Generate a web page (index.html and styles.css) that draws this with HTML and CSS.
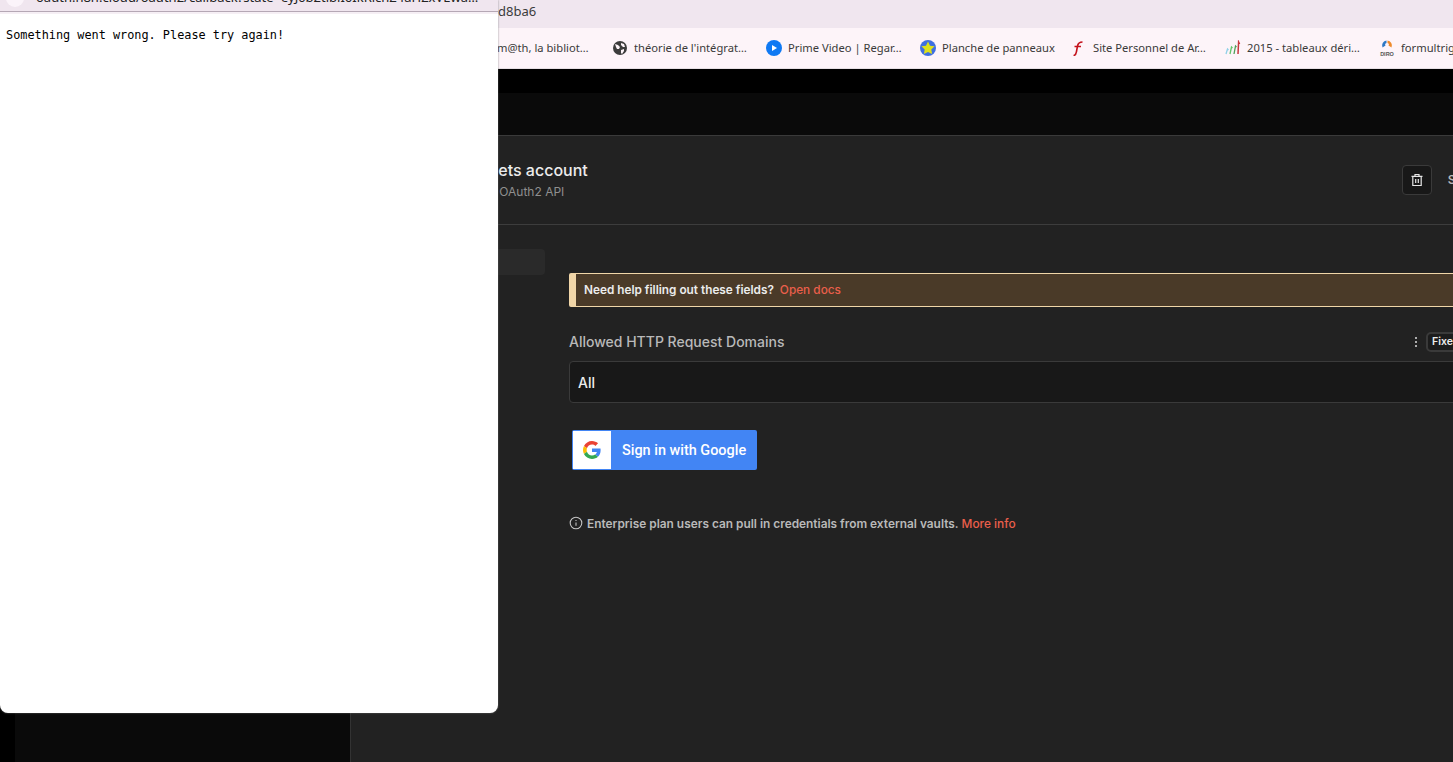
FILE: index.html
```html
<!DOCTYPE html>
<html lang="fr">
<head>
<meta charset="utf-8">
<title>n8n credential</title>
<link rel="stylesheet" href="styles.css">
</head>
<body>
<div class="page">
  <div class="tabbar"><span class="tab-url">d8ba6</span></div>
  <nav class="bookmarks">
    <div class="bm"><span class="bm-ico"></span><span class="bm-text">Bibm@th, la bibliot…</span></div>
    <div class="bm">
      <svg class="bm-ico" viewBox="0 0 16 16"><circle cx="8" cy="8" r="7" fill="#3c3c3c"/><path d="M3 4l3 1 2 2-1 2-2 0-1-2zM9 3l3 1 1 3-2 0-2-2zM9 10l3-1 0 2-2 3-1-1z" fill="#fdf4f9"/></svg>
      <span class="bm-text">théorie de l'intégrat…</span>
    </div>
    <div class="bm">
      <svg class="bm-ico" viewBox="0 0 16 16"><circle cx="8" cy="8" r="8" fill="#0f79f3"/><path d="M6 5l5 3-5 3z" fill="#fff"/></svg>
      <span class="bm-text">Prime Video | Regar…</span>
    </div>
    <div class="bm bm-short">
      <svg class="bm-ico" viewBox="0 0 16 16"><circle cx="8" cy="8" r="8" fill="#3f6fe0"/><path d="M8 1.500l2 4.200 4.600.6-3.300 3.200.8 4.600L8 11.900l-4.100 2.200.8-4.600L1.400 6.300 6 5.700z" fill="#dde11a"/></svg>
      <span class="bm-text">Planche de panneaux</span>
    </div>
    <div class="bm">
      <svg class="bm-ico" viewBox="0 0 16 16"><path d="M2.500 15.500c2 0 2.500-1.500 3-4l1-5.500c.4-2 1.200-4 5-4M3.500 6.500h6.500" fill="none" stroke="#c4121c" stroke-width="1.600"/></svg>
      <span class="bm-text">Site Personnel de Ar…</span>
    </div>
    <div class="bm">
      <svg class="bm-ico" viewBox="0 0 16 16"><path d="M1 14l1.500-5 1 1" fill="none" stroke="#8fd0e8" stroke-width="1.300"/><path d="M5 14l1.500-7 1 1" fill="none" stroke="#62c46a" stroke-width="1.300"/><path d="M9 14l1.500-8 1 1" fill="none" stroke="#4f9f5a" stroke-width="1.300"/><path d="M13 14l.6-12 1 2" fill="none" stroke="#c9383f" stroke-width="1.500"/></svg>
      <span class="bm-text">2015 - tableaux déri…</span>
    </div>
    <div class="bm">
      <svg class="bm-ico" viewBox="0 0 16 16"><path d="M7.500 .5a5 5 0 0 0-4 7l3-2-.5-1.500 1.500-1z" fill="#2f78c4"/><path d="M8.500 .5a5 5 0 0 1 4 7l-3-2 .5-1.500-1.500-1z" fill="#ee8a2c"/><text x="8" y="15.500" text-anchor="middle" class="diro">DIRO</text></svg>
      <span class="bm-text">formultrig</span>
    </div>
  </nav>
  <div class="blackband"></div>
  <div class="app">
    <aside class="gutter"></aside>
    <aside class="sidebar"></aside>
    <div class="main">
      <div class="topbar"></div>
      <div class="panel">
        <header class="cred-head">
          <div class="cred-titles">
            <div class="cred-title">Google Sheets account</div>
            <div class="cred-sub">Google Sheets OAuth2 API</div>
          </div>
          <div class="cred-actions">
            <button class="trash" aria-label="Delete">
              <svg viewBox="0 0 14 14" class="trash-ico" fill="none" stroke="#e6e6e6" stroke-width="1.200"><path d="M1.500 3.300h11M5 3.300V1.500h4v1.800M2.800 3.300v9.200h8.400V3.300"/><path d="M5.700 6v4M8.300 6v4"/></svg>
            </button>
            <span class="save">Save</span>
          </div>
        </header>
        <div class="cred-body">
          <div class="tabs"><div class="tab-active"></div></div>
          <div class="form">
            <div class="callout">
              <span class="callout-text">Need help filling out these fields?</span>
              <a class="link">Open docs</a>
            </div>
            <div class="field-head">
              <span class="field-label">Allowed HTTP Request Domains</span>
              <div class="field-tools">
                <svg class="kebab" viewBox="0 0 4 12"><circle cx="2" cy="2" r="1" fill="#ddd"/><circle cx="2" cy="6" r="1" fill="#ddd"/><circle cx="2" cy="10" r="1" fill="#ddd"/></svg>
                <span class="pill">Fixed</span>
              </div>
            </div>
            <div class="select">All</div>
            <button class="google">
              <span class="google-tile">
                <svg viewBox="0 0 48 48" class="g-logo">
                  <path fill="#EA4335" d="M24 9.500c3.540 0 6.710 1.220 9.210 3.600l6.850-6.850C35.900 2.380 30.470 0 24 0 14.620 0 6.510 5.380 2.560 13.220l7.980 6.190C12.430 13.720 17.740 9.500 24 9.500z"/>
                  <path fill="#4285F4" d="M46.980 24.550c0-1.570-.15-3.090-.38-4.550H24v9.020h12.940c-.58 2.960-2.260 5.480-4.780 7.180l7.730 6c4.510-4.180 7.090-10.360 7.090-17.650z"/>
                  <path fill="#FBBC05" d="M10.530 28.590c-.48-1.450-.76-2.990-.76-4.590s.27-3.140.76-4.590l-7.980-6.190C.92 16.460 0 20.120 0 24c0 3.880.92 7.540 2.560 10.780l7.970-6.190z"/>
                  <path fill="#34A853" d="M24 48c6.480 0 11.930-2.130 15.890-5.810l-7.730-6c-2.150 1.450-4.920 2.300-8.160 2.300-6.260 0-11.570-4.220-13.470-9.910l-7.980 6.190C6.510 42.620 14.620 48 24 48z"/>
                </svg>
              </span>
              <span class="google-label">Sign in with Google</span>
            </button>
            <div class="note">
              <svg class="note-ico" viewBox="0 0 14 14" fill="none" stroke="#c4c4c4" stroke-width="1.100"><circle cx="7" cy="7" r="5.800"/><path d="M7 6.400v3.400"/><path d="M7 4.100v.8"/></svg>
              <span>Enterprise plan users can pull in credentials from external vaults.</span>
              <a class="link">More info</a>
            </div>
          </div>
        </div>
      </div>
    </div>
  </div>
</div>
<div class="popup">
  <div class="popup-bar">
    <span class="popup-ico"></span>
    <span class="popup-url">oauth.n8n.cloud/oauth2/callback?state=eyJ0b2tlbiI6IkRlcnZ4aHZxVEwa…</span>
  </div>
  <div class="popup-strip"></div>
  <pre class="popup-msg">Something went wrong. Please try again!</pre>
</div>
</body>
</html>
```
FILE: styles.css
```css
* { box-sizing: border-box; }
html, body { margin: 0; padding: 0; height: 100%; overflow: hidden; background: #000; }
body { font-family: "Inter", "Liberation Sans", sans-serif; }

.page { width: 1453px; height: 762px; display: flex; flex-direction: column; overflow: hidden; }

.tabbar { height: 28px; flex: none; background: #f0e6ef; padding: 0 0 0 498px; }
.tab-url { font: 13px/21px "Noto Sans", "Open Sans", sans-serif; color: #3b3b3b; }

.bookmarks { height: 41px; flex: none; background: #fdf4f9; border-bottom: 1px solid #e6dfe4; display: flex; align-items: center; padding-left: 458px; overflow: hidden; }
.bm { flex: none; width: 154px; display: flex; align-items: center; gap: 6px; }
.bm-short { width: 151px; }
.bm-ico { flex: none; width: 16px; height: 16px; display: block; }
.bm-text { font: 11.200px/16px "Noto Sans", "Open Sans", sans-serif; color: #3a3a3a; white-space: nowrap; width: 116px; overflow: hidden; }
.diro { font: 600 5.500px "Liberation Sans", sans-serif; fill: #555; }

.blackband { height: 24px; flex: none; background: #000; }

.app { flex: 1; display: flex; min-height: 0; }
.gutter { width: 15px; flex: none; background: #000; }
.sidebar { flex: none; background: #0a0a0a; border-right: 1px solid #333; width: 336px; }
.main { flex: none; width: 1200px; display: flex; flex-direction: column; background: #222; }
.topbar { flex: none; background: #0a0a0a; margin-left: -1px; border-bottom: 1px solid #3a3a3a; height: 43px; }
.panel { flex: 1; display: flex; flex-direction: column; }

.cred-head { height: 89px; flex: none; display: flex; align-items: center; border-bottom: 1px solid #3d3d3d; padding: 0 0 0 59px; }
.cred-titles { display: flex; flex-direction: column; gap: 2px; padding-bottom: 2px; }
.cred-title { font-size: 16px; line-height: 24px; font-weight: 500; color: #ececec; white-space: nowrap; }
.cred-sub { font-size: 12px; line-height: 16px; color: #8f8f8f; white-space: nowrap; margin-left: 3px; }
.cred-actions { margin-left: 814px; display: flex; align-items: center; gap: 16px; padding-bottom: 1px; }
.trash { width: 30px; height: 30px; padding: 0; background: #181818; border: 1px solid #3a3a3a; border-radius: 4px; display: flex; align-items: center; justify-content: center; }
.trash-ico { width: 14px; height: 14px; display: block; }
.save { font-size: 12px; font-weight: 600; color: #b8b8b8; }

.cred-body { display: flex; padding: 24px 0 0 24px; gap: 24px; }
.tabs { width: 170px; flex: none; }
.tab-active { height: 26px; background: #2a2a2a; border-radius: 4px; }

.form { width: 950px; flex: none; padding-top: 24px; display: flex; flex-direction: column; }
.callout { height: 34px; flex: none; background: #4a3a28; border: 1px solid #f1d6a8; border-left-width: 7px; border-radius: 2px; display: flex; align-items: center; gap: 6px; padding: 0 0 1px 8px; font-size: 11.800px; }
.callout-text { color: #ececec; font-weight: 600; }
.link { color: #ea5f4b; font-weight: 500; }

.field-head { margin-top: 25px; height: 20px; display: flex; align-items: center; }
.field-label { font-size: 14px; line-height: 20px; font-weight: 500; color: #b9b9b9; white-space: nowrap; }
.field-tools { margin-left: auto; width: 105px; display: flex; align-items: center; gap: 8px; }
.kebab { width: 4px; height: 12px; display: block; }
.pill { font-size: 10.500px; font-weight: 600; line-height: 14px; color: #ececec; background: #1c1c1c; border: 2px solid #3a3a3a; border-radius: 5px; padding: 1px 4px; }

.select { margin-top: 9px; height: 42px; flex: none; background: #181818; border: 1px solid #3a3a3a; border-radius: 4px; display: flex; align-items: center; padding-left: 8px; font-size: 14px; font-weight: 500; color: #ececec; }

.google { margin: 27px 0 0 3px; width: 185px; height: 40px; padding: 1px; border: none; border-radius: 2px; background: #4285f4; display: flex; align-items: center; }
.google-tile { width: 38px; height: 38px; background: #fff; display: flex; align-items: center; justify-content: center; flex: none; }
.g-logo { width: 18px; height: 18px; display: block; }
.google-label { margin-left: 11px; font-family: "Roboto", sans-serif; font-size: 14.450px; font-weight: 500; color: #fff; white-space: nowrap; }

.note { margin-top: 44px; height: 18px; display: flex; align-items: center; font-size: 11.880px; font-weight: 600; color: #b9b9b9; white-space: nowrap; }
.note-ico { width: 14px; height: 14px; display: block; margin-right: 4px; }
.note .link { margin-left: 3px; }

.popup { position: absolute; left: 0; top: 0; width: 498px; height: 713px; background: #fff; border-bottom-right-radius: 8px; border-bottom-left-radius: 8px; box-shadow: 0 0 2px rgba(120,120,120,.9); overflow: hidden; }
.popup-bar { height: 12px; background: #f0e6ef; border-bottom: 1px solid #b5a8b5; overflow: hidden; position: relative; }
.popup-ico { position: absolute; left: 6px; top: -11px; width: 18px; height: 18px; border-radius: 50%; background: #fbf4fa; }
.popup-url { position: absolute; left: 36px; top: -11px; font: 13px/17px "Noto Sans", sans-serif; color: #222; white-space: nowrap; }
.popup-strip { height: 2px; background: #f6eff5; }
.popup-msg { margin: 14px 0 0 6px; font: 11.850px/14px "DejaVu Sans Mono", "Liberation Mono", monospace; color: #000; }
```
